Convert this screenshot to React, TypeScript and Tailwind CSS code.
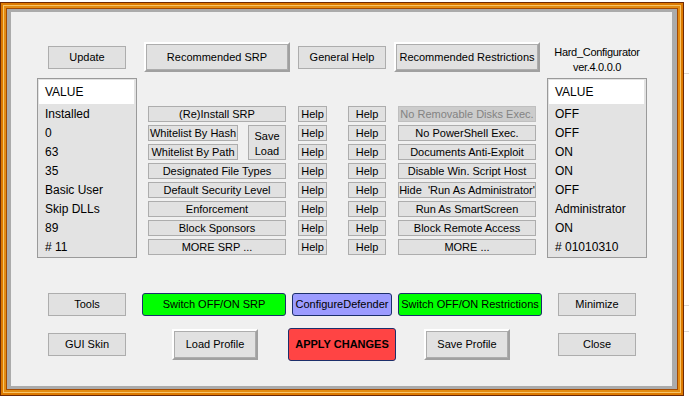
import React from "react";

type P = { className?: string; children?: React.ReactNode };

const flatBase =
  "flex items-center justify-center bg-[#e1e1e1] border border-[#adadad] text-[11px] leading-none text-black whitespace-pre";

function Flat({ className = "", children }: P) {
  return <div className={`${flatBase} ${className}`}>{children}</div>;
}

function Disabled({ className = "", children }: P) {
  return (
    <div
      className={`flex items-center justify-center bg-[#cccccc] border border-[#bfbfbf] text-[11px] leading-none text-[#838383] whitespace-pre ${className}`}
    >
      {children}
    </div>
  );
}

function Raised({ className = "", children }: P) {
  return (
    <div
      className={`flex border-2 border-t-white border-l-white border-r-[#a0a0a0] border-b-[#a0a0a0] ${className}`}
    >
      <div className="flex-1 flex items-center justify-center border border-[#adadad] bg-[#e1e1e1] text-[11px] leading-none whitespace-pre">
        {children}
      </div>
    </div>
  );
}

function Colored({ className = "", children }: P) {
  return (
    <div
      className={`flex items-center justify-center rounded-[3px] border border-[#1c2f6b] text-[11px] leading-none whitespace-pre ${className}`}
    >
      {children}
    </div>
  );
}

function List({ rows }: { rows: string[] }) {
  return (
    <div className="w-[100px] h-[180px] border border-[#9a9a9a] bg-[#e3e3e3] pt-[1px] pl-[1px] pr-[2px] flex flex-col text-[12px] leading-none">
      <div className="h-[24px] shrink-0 bg-white flex items-center pl-[6px]">VALUE</div>
      {rows.map((r, i) => (
        <div key={i} className="h-[19px] shrink-0 flex items-center pl-[6px] whitespace-pre">
          {r}
        </div>
      ))}
    </div>
  );
}

const leftRows = ["Installed", "0", "63", "35", "Basic User", "Skip DLLs", "89", "# 11"];
const rightRows = ["OFF", "OFF", "ON", "ON", "OFF", "Administrator", "ON", "# 01010310"];

const colA = ["Designated File Types", "Default Security Level", "Enforcement", "Block Sponsors", "MORE SRP ..."];
const colD = [
  "No PowerShell Exec.",
  "Documents Anti-Exploit",
  "Disable Win. Script Host",
  "Hide  'Run As Administrator'",
  "Run As SmartScreen",
  "Block Remote Access",
  "MORE ...",
];
const eight = [0, 1, 2, 3, 4, 5, 6, 7];

export default function App() {
  return (
    <div className="w-[689px] h-[399px] bg-white flex overflow-hidden text-black [font-family:'Liberation_Sans',Arial,sans-serif]">
      {/* window frame */}
      <div className="mt-[2px] w-[684px] h-[394px] shrink-0 flex border border-[#6e2a06]">
        <div className="flex-1 flex border-2 border-[#dd7a00]">
          <div className="flex-1 flex border border-[#f6c46a]">
            <div className="flex-1 flex border-2 border-[#e38c12]">
              <div className="flex-1 flex border border-[#a34a04]">
                <div className="flex-1 flex border-t-[3px] border-b-[3px] border-l-[4px] border-r-[5px] border-[#ababab]">
                  {/* content */}
                  <div className="flex-1 flex flex-col bg-[#f0f0f0]">
                    {/* Row 1 */}
                    <div className="mt-[30px] h-[30px] flex items-center">
                      <Flat className="ml-[37px] w-[78px] h-[23px]">Update</Flat>
                      <Raised className="ml-[18px] w-[146px] h-[30px]">Recommended SRP</Raised>
                      <Flat className="ml-[8px] w-[88px] h-[23px]">General Help</Flat>
                      <Raised className="ml-[8px] w-[146px] h-[30px]">Recommended Restrictions</Raised>
                      <div className="ml-[7px] w-[100px] self-start mt-[3px] flex flex-col items-center text-[11px] leading-[15px] tracking-[-0.3px]">
                        <span>Hard_Configurator</span>
                        <span>ver.4.0.0.0</span>
                      </div>
                    </div>

                    {/* Row 2 */}
                    <div className="mt-[6px] flex">
                      <div className="ml-[26px]">
                        <List rows={leftRows} />
                      </div>
                      <div className="ml-[11px] pt-[28px] flex">
                        <div className="w-[138px] flex flex-col gap-[3px]">
                          <Flat className="h-[16px]">(Re)Install SRP</Flat>
                          <div className="flex h-[35px]">
                            <div className="w-[90px] flex flex-col gap-[3px]">
                              <Flat className="h-[16px]">Whitelist By Hash</Flat>
                              <Flat className="h-[16px]">Whitelist By Path</Flat>
                            </div>
                            <Flat className="ml-[10px] w-[38px] h-[35px] flex-col gap-[4px] pt-[2px]">
                              <span>Save</span>
                              <span>Load</span>
                            </Flat>
                          </div>
                          {colA.map((t) => (
                            <Flat key={t} className="h-[16px]">
                              {t}
                            </Flat>
                          ))}
                        </div>
                        <div className="ml-[12px] w-[29px] flex flex-col gap-[3px]">
                          {eight.map((i) => (
                            <Flat key={i} className="h-[16px]">
                              Help
                            </Flat>
                          ))}
                        </div>
                        <div className="ml-[21px] w-[38px] flex flex-col gap-[3px]">
                          {eight.map((i) => (
                            <Flat key={i} className="h-[16px]">
                              Help
                            </Flat>
                          ))}
                        </div>
                        <div className="ml-[12px] w-[138px] flex flex-col gap-[3px]">
                          <Disabled className="h-[16px]">No Removable Disks Exec.</Disabled>
                          {colD.map((t) => (
                            <Flat key={t} className="h-[16px]">
                              {t}
                            </Flat>
                          ))}
                        </div>
                      </div>
                      <div className="ml-[11px]">
                        <List rows={rightRows} />
                      </div>
                    </div>

                    {/* Row 3 */}
                    <div className="mt-[35px] h-[23px] flex items-center">
                      <Flat className="ml-[37px] w-[78px] h-[23px]">Tools</Flat>
                      <Colored className="ml-[16px] w-[144px] h-[23px] bg-[#00ff00]">Switch OFF/ON SRP</Colored>
                      <Colored className="ml-[6px] w-[100px] h-[23px] bg-[#9c9cff]">ConfigureDefender</Colored>
                      <Colored className="ml-[6px] w-[144px] h-[23px] bg-[#00ff00]">Switch OFF/ON Restrictions</Colored>
                      <Flat className="ml-[16px] w-[78px] h-[23px]">Minimize</Flat>
                    </div>

                    {/* Row 4 */}
                    <div className="mt-[12px] h-[33px] flex items-center">
                      <Flat className="ml-[37px] w-[78px] h-[23px]">GUI Skin</Flat>
                      <Raised className="ml-[46px] w-[86px] h-[31px]">Load Profile</Raised>
                      <Colored className="ml-[30px] w-[108px] h-[33px] bg-[#ff4444] font-bold">APPLY CHANGES</Colored>
                      <Raised className="ml-[28px] w-[86px] h-[31px]">Save Profile</Raised>
                      <Flat className="ml-[48px] w-[78px] h-[23px]">Close</Flat>
                    </div>
                  </div>
                </div>
              </div>
            </div>
          </div>
        </div>
      </div>
      {/* background strip to the right */}
      <div className="flex-1 flex flex-col">
        <div className="mt-[73px] h-px bg-[#dcdcdc]" />
        <div className="mt-[231px] h-px bg-[#dcdcdc]" />
        <div className="mt-[25px] h-px bg-[#dcdcdc]" />
      </div>
    </div>
  );
}
